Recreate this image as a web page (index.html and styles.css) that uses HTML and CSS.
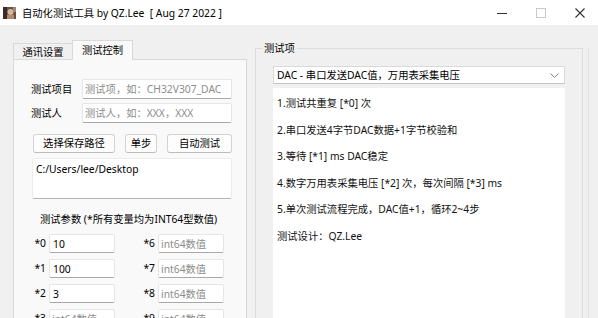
FILE: index.html
```html
<!DOCTYPE html>
<html lang="zh-CN">
<head>
<meta charset="utf-8">
<title>自动化测试工具</title>
<link rel="stylesheet" href="styles.css">
</head>
<body>
<div class="titlebar">
  <div class="app-icon">
    <svg width="13" height="12" viewBox="0 0 13 12">
      <rect width="13" height="12" fill="#6b5040"/>
      <rect x="0" y="0" width="4" height="12" fill="#3a2c24"/>
      <circle cx="7.5" cy="5" r="3" fill="#d8b69a"/>
      <rect x="4" y="8" width="7" height="4" fill="#b08a70"/>
      <rect x="10" y="0" width="3" height="5" fill="#9c8878"/>
    </svg>
  </div>
  <div class="title">自动化测试工具 by QZ.Lee  [ Aug 27 2022 ]</div>
  <div class="controls">
    <span class="ctl"><svg width="10" height="10" viewBox="0 0 10 10"><line x1="0" y1="5.5" x2="10" y2="5.5" stroke="#333" stroke-width="1"/></svg></span>
    <span class="ctl"><svg width="10" height="10" viewBox="0 0 10 10"><rect x="0.5" y="0.5" width="9" height="9" fill="none" stroke="#c9c9c9" stroke-width="1"/></svg></span>
    <span class="ctl"><svg width="10" height="10" viewBox="0 0 10 10"><path d="M0.5 0.5 L9.5 9.5 M9.5 0.5 L0.5 9.5" stroke="#333" stroke-width="1.1" fill="none"/></svg></span>
  </div>
</div>

<div class="main">
  <div class="left">
    <div class="tabs">
      <div class="tab">通讯设置</div>
      <div class="tab active">测试控制</div>
    </div>
    <div class="pane">
      <div class="field-row">
        <span class="field-label">测试项目</span>
        <div class="input wide"><span class="ph">测试项，如：CH32V307_DAC</span></div>
      </div>
      <div class="field-row">
        <span class="field-label">测试人</span>
        <div class="input wide"><span class="ph">测试人，如：XXX，XXX</span></div>
      </div>
      <div class="buttons">
        <div class="btn b1">选择保存路径</div>
        <div class="btn b2">单步</div>
        <div class="btn b3">自动测试</div>
      </div>
      <div class="pathbox">C:/Users/lee/Desktop</div>
      <div class="heading">测试参数 (*所有变量均为INT64型数值)</div>
      <div class="params">
        <span class="plabel">*0</span><div class="input"><span class="val">10</span></div>
        <span class="plabel">*6</span><div class="input"><span class="ph">int64数值</span></div>
        <span class="plabel">*1</span><div class="input"><span class="val">100</span></div>
        <span class="plabel">*7</span><div class="input"><span class="ph">int64数值</span></div>
        <span class="plabel">*2</span><div class="input"><span class="val">3</span></div>
        <span class="plabel">*8</span><div class="input"><span class="ph">int64数值</span></div>
        <span class="plabel">*3</span><div class="input"><span class="ph">int64数值</span></div>
        <span class="plabel">*9</span><div class="input"><span class="ph">int64数值</span></div>
      </div>
    </div>
  </div>

  <fieldset class="group">
    <legend>测试项</legend>
    <div class="group-body">
      <div class="combo">
        <span>DAC - 串口发送DAC值，万用表采集电压</span>
        <svg class="chev" width="9" height="5" viewBox="0 0 9 5"><polyline points="0.5,0.5 4.5,4.5 8.5,0.5" fill="none" stroke="#888" stroke-width="1"/></svg>
      </div>
      <div class="desc">
        <div>1.测试共重复 [*0] 次</div>
        <div>2.串口发送4字节DAC数据+1字节校验和</div>
        <div>3.等待 [*1] ms DAC稳定</div>
        <div>4.数字万用表采集电压 [*2] 次，每次间隔 [*3] ms</div>
        <div>5.单次测试流程完成，DAC值+1，循环2~4步</div>
        <div>测试设计：QZ.Lee</div>
      </div>
    </div>
  </fieldset>
  <div class="edge"></div>
</div>
</body>
</html>
```
FILE: styles.css
```css
html, body {
  margin: 0;
  padding: 0;
}
body {
  width: 598px;
  height: 318px;
  overflow: hidden;
  background: #f0f0f0;
  color: #111;
  font-family: "Noto Sans", "Noto Sans CJK SC", sans-serif;
  font-size: 10.3px;
  line-height: 16px;
}

/* title bar */
.titlebar {
  height: 25px;
  background: #fff;
  display: flex;
  align-items: center;
}
.app-icon {
  width: 13px;
  height: 12px;
  margin-left: 3px;
  margin-right: 6px;
  display: flex;
}
.title {
  white-space: pre;
  color: #000;
  font-size: 10.3px;
  padding-top: 1px;
}
.controls {
  margin-left: auto;
  margin-right: -1px;
  display: flex;
}
.ctl {
  width: 39px;
  height: 25px;
  display: flex;
  align-items: center;
  justify-content: center;
}

/* main area */
.main {
  display: flex;
  height: 293px;
  padding-left: 13px;
}
.left {
  width: 234px;
  margin-top: 15px;
  display: flex;
  flex-direction: column;
}
.tabs {
  display: flex;
  align-items: flex-end;
  height: 19px;
  position: relative;
  z-index: 1;
}
.tab {
  box-sizing: border-box;
  width: 59px;
  height: 16px;
  border: 1px solid #d9d9d9;
  border-bottom: none;
  border-right: none;
  background: #f0f0f0;
  text-align: center;
  line-height: 16px;
  color: #000;
}
.tab.active {
  width: 61px;
  height: 20px;
  margin-bottom: -1px;
  border-right: 1px solid #d9d9d9;
  background: #f9f9f9;
  line-height: 19px;
}
.pane {
  flex: 1;
  box-sizing: border-box;
  background: #f9f9f9;
  border: 1px solid #d9d9d9;
  padding: 19px 0 0 17px;
}
.field-row {
  display: flex;
  align-items: center;
  height: 20px;
  margin-bottom: 4px;
}
.field-label {
  width: 51px;
  color: #000;
}
.input {
  box-sizing: border-box;
  height: 19px;
  background: #fff;
  border: 1px solid #e6e6e6;
  border-bottom-color: #a8a8a8;
  border-radius: 2px;
  display: flex;
  align-items: center;
  padding-left: 2px;
  overflow: hidden;
  white-space: nowrap;
}
.input.wide {
  width: 150px;
  height: 20px;
}
.ph {
  color: #8c8c8c;
}
.val {
  color: #000;
  padding-left: 1px;
}

.buttons {
  display: flex;
  gap: 10px;
  margin-top: 11px;
  margin-left: 2px;
}
.btn {
  box-sizing: border-box;
  height: 19px;
  background: #fdfdfd;
  border: 1px solid #d3d3d3;
  border-bottom-color: #bcbcbc;
  border-radius: 3px;
  text-align: center;
  line-height: 17px;
  color: #000;
}
.b1 { width: 82px; }
.b2 { width: 32px; }
.b3 { width: 65px; }

.pathbox {
  box-sizing: border-box;
  width: 200px;
  height: 41px;
  margin-top: 5px;
  margin-left: 1px;
  background: #fff;
  border: 1px solid #ececec;
  border-bottom-color: #b5b5b5;
  border-radius: 2px;
  padding: 2px 3px;
  color: #000;
}
.heading {
  margin-top: 12px;
  padding-left: 9px;
  color: #000;
  white-space: nowrap;
}
.params {
  display: grid;
  grid-template-columns: 16px 66px 43px 66px;
  grid-auto-rows: 19px;
  row-gap: 6px;
  margin-top: 7px;
  margin-left: 2px;
}
.plabel {
  text-align: right;
  padding-right: 3px;
  line-height: 19px;
  color: #000;
}
.params .input {
  width: 66px;
}

/* right group box */
.group {
  box-sizing: border-box;
  width: 328px;
  height: 300px;
  margin: 15px 0 0 8px;
  padding: 0;
  border: 1px solid #dcdcdc;
  min-width: 0;
}
.group legend {
  margin-left: 6px;
  padding: 0 2px;
  line-height: 16px;
  color: #000;
}
.group-body {
  padding: 10px 17px 0 17px;
}
.combo {
  box-sizing: border-box;
  height: 18px;
  background: #fff;
  border: 1px solid #dadada;
  border-bottom-color: #c4c4c4;
  display: flex;
  align-items: center;
  justify-content: space-between;
  padding: 0 5px 0 3px;
  color: #000;
}
.chev {
  display: block;
}
.desc {
  margin-top: 4px;
  height: 240px;
  background: #fff;
  padding: 2px 4px 0 4px;
  line-height: 26.6px;
  color: #111;
}
.edge {
  width: 1px;
  background: #e2e2e2;
  margin: 23px 0 0 5px;
}
```
